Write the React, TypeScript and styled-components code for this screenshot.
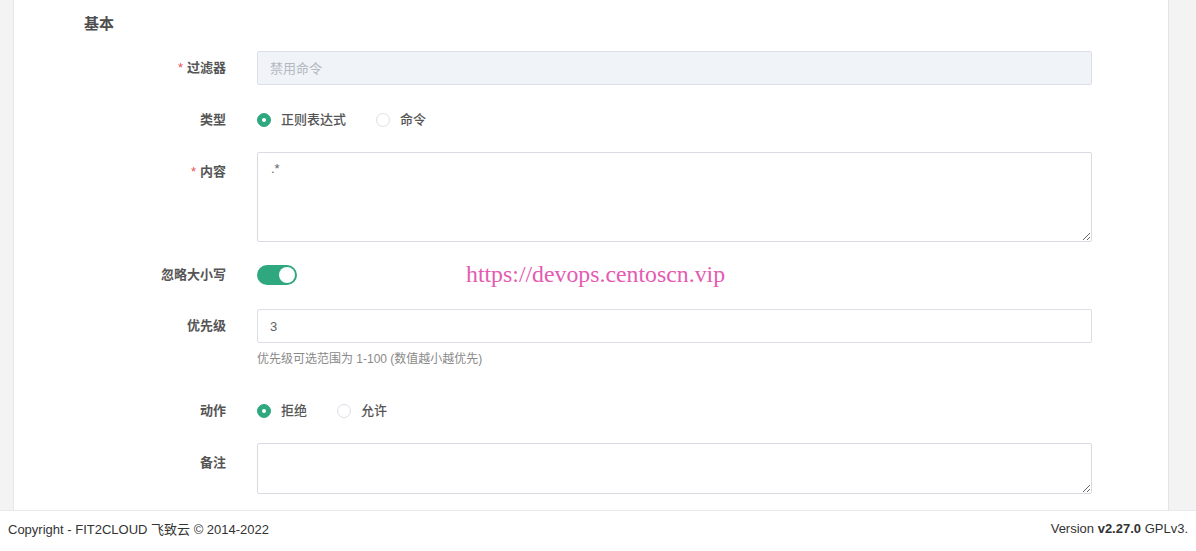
import styled, { createGlobalStyle } from "styled-components";

const GlobalStyle = createGlobalStyle`
  html, body {
    margin: 0;
    padding: 0;
    background: #f3f3f4;
    font-family: "Liberation Sans", "Noto Sans CJK SC", sans-serif;
    color: #606266;
  }
  * {
    box-sizing: border-box;
  }
`;

const Page = styled.div`
  width: 1196px;
  height: 551px;
  display: flex;
  flex-direction: column;
  position: relative;
  overflow: hidden;
`;

const Main = styled.div`
  height: 510px;
  padding: 0 27px 0 13px;
  display: flex;
`;

const Card = styled.div`
  flex: 1;
  background: #fff;
  border-left: 1px solid #e7e7ea;
  border-right: 1px solid #e4e4e8;
  padding: 14px 76px 0 70px;
  overflow: hidden;
`;

const SectionTitle = styled.h3`
  margin: 0;
  font-size: 15px;
  line-height: 20px;
  font-weight: 600;
  color: #4d4d4d;
`;

const Form = styled.div`
  display: flex;
  flex-direction: column;
`;

const Row = styled.div<{ $top: number; $align?: "center" | "start" }>`
  display: grid;
  grid-template-columns: 142px 1fr;
  column-gap: 31px;
  margin-top: ${(p) => p.$top}px;
  align-items: ${(p) => (p.$align === "start" ? "start" : "center")};
`;

const Label = styled.label<{ $lh?: number }>`
  text-align: right;
  font-size: 13px;
  font-weight: 600;
  color: #555;
  line-height: ${(p) => p.$lh ?? 20}px;
`;

const Star = styled.span`
  color: #e8505b;
  margin-right: 4px;
  font-weight: 400;
`;

const Control = styled.div<{ $h?: number }>`
  display: flex;
  flex-direction: column;
  min-height: ${(p) => p.$h ?? 32}px;
  justify-content: center;
`;

const TextInput = styled.input`
  width: 100%;
  height: 34px;
  border: 1px solid #dcdfe6;
  border-radius: 2px;
  padding: 0 12px;
  font-family: inherit;
  font-size: 13px;
  color: #606266;
  background: #fff;
  outline: none;
  &:disabled {
    background: #f0f3f8;
    border-color: #dcdfe6;
    color: #b4b8c0;
  }
  &:disabled::placeholder {
    color: #b4b8c0;
  }
`;

const TextArea = styled.textarea<{ $h: number }>`
  display: block;
  width: 100%;
  height: ${(p) => p.$h}px;
  border: 1px solid #d9dbe2;
  border-radius: 2px;
  padding: 8px 13px;
  font-family: inherit;
  font-size: 13px;
  color: #606266;
  outline: none;
  resize: vertical;
`;

const Help = styled.div`
  margin-top: 8px;
  font-size: 12px;
  line-height: 16px;
  color: #8a8a8a;
`;

const RadioGroup = styled.div`
  display: flex;
  align-items: center;
  gap: 30px;
`;

const RadioItem = styled.label`
  display: flex;
  align-items: center;
  gap: 10px;
  font-size: 13px;
  line-height: 18px;
  font-weight: 500;
  color: #555;
  cursor: pointer;
`;

const RadioDot = styled.span<{ $on?: boolean }>`
  width: 14px;
  height: 14px;
  border-radius: 50%;
  border: 1px solid ${(p) => (p.$on ? "#2fa880" : "#dcdfe6")};
  background: ${(p) => (p.$on ? "#2fa880" : "#fff")};
  display: flex;
  align-items: center;
  justify-content: center;
  &::after {
    content: "";
    width: 4px;
    height: 4px;
    border-radius: 50%;
    background: #fff;
    display: ${(p) => (p.$on ? "block" : "none")};
  }
`;

const Switch = styled.span<{ $on?: boolean }>`
  width: 40px;
  height: 20px;
  border-radius: 10px;
  background: ${(p) => (p.$on ? "#2fa880" : "#dcdfe6")};
  display: flex;
  align-items: center;
  justify-content: ${(p) => (p.$on ? "flex-end" : "flex-start")};
  padding: 0 2px;
  &::after {
    content: "";
    width: 16px;
    height: 16px;
    border-radius: 50%;
    background: #fff;
  }
`;

const Watermark = styled.div`
  position: absolute;
  left: 466px;
  top: 259px;
  font-family: "Liberation Serif", serif;
  font-size: 23.8px;
  line-height: 30px;
  color: #e35bb2;
  pointer-events: none;
`;

const Footer = styled.footer`
  height: 41px;
  background: #fff;
  border-top: 1px solid #e7eaec;
  display: flex;
  align-items: center;
  justify-content: space-between;
  padding: 0 8px 5px 8px;
  font-size: 13px;
  color: #333;
`;

function Radio({ options, value }: { options: string[]; value: string }) {
  return (
    <RadioGroup>
      {options.map((o) => (
        <RadioItem key={o}>
          <RadioDot $on={o === value} />
          {o}
        </RadioItem>
      ))}
    </RadioGroup>
  );
}

export default function App() {
  return (
    <>
      <GlobalStyle />
      <Page>
        <Main>
          <Card>
            <SectionTitle>基本</SectionTitle>
            <Form>
              <Row $top={17}>
                <Label>
                  <Star>*</Star>过滤器
                </Label>
                <Control $h={34}>
                  <TextInput disabled placeholder="禁用命令" />
                </Control>
              </Row>
              <Row $top={19}>
                <Label>类型</Label>
                <Control>
                  <Radio options={["正则表达式", "命令"]} value="正则表达式" />
                </Control>
              </Row>
              <Row $top={16} $align="start">
                <Label $lh={40}>
                  <Star>*</Star>内容
                </Label>
                <TextArea $h={90} defaultValue=".*" />
              </Row>
              <Row $top={17}>
                <Label>忽略大小写</Label>
                <Control>
                  <Switch $on />
                </Control>
              </Row>
              <Row $top={18} $align="start">
                <Label $lh={34}>优先级</Label>
                <Control>
                  <TextInput defaultValue="3" />
                  <Help>优先级可选范围为 1-100 (数值越小越优先)</Help>
                </Control>
              </Row>
              <Row $top={28}>
                <Label>动作</Label>
                <Control>
                  <Radio options={["拒绝", "允许"]} value="拒绝" />
                </Control>
              </Row>
              <Row $top={16} $align="start">
                <Label $lh={40}>备注</Label>
                <TextArea $h={51} />
              </Row>
            </Form>
          </Card>
        </Main>
        <Footer>
          <span>Copyright - FIT2CLOUD 飞致云 © 2014-2022</span>
          <span>
            Version <b>v2.27.0</b> GPLv3.
          </span>
        </Footer>
        <Watermark>https://devops.centoscn.vip</Watermark>
      </Page>
    </>
  );
}
